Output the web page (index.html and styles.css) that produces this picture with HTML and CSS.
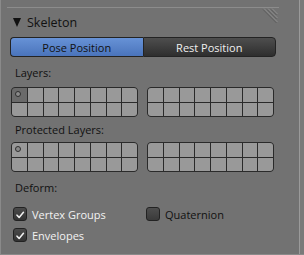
FILE: index.html
```html
<!DOCTYPE html>
<html>
<head>
<meta charset="utf-8">
<link rel="stylesheet" href="styles.css">
</head>
<body>
<div class="frame">
  <div class="region">
    <div class="panel">
      <div class="header">
        <span class="tri"></span>
        <span class="title">Skeleton</span>
        <svg class="grip" width="16" height="19" viewBox="0 0 16 19">
          <g stroke="#8e8e8e" stroke-width="1">
            <line x1="2" y1="0.5" x2="15.5" y2="14"/>
            <line x1="6" y1="0.5" x2="15.5" y2="10"/>
            <line x1="10" y1="0.5" x2="15.5" y2="6"/>
          </g>
          <g stroke="#5c5c5c" stroke-width="1">
            <line x1="1" y1="1.5" x2="14.5" y2="15"/>
            <line x1="5" y1="1.5" x2="14.5" y2="11"/>
            <line x1="9" y1="1.5" x2="14.5" y2="7"/>
          </g>
        </svg>
      </div>
      <div class="seg">
        <div class="segbtn on">Pose Position</div>
        <div class="segbtn off">Rest Position</div>
      </div>
      <div class="label l1">Layers:</div>
      <div class="grids">
        <div class="grid">
          <div class="cell act"><span class="dot"></span></div><div class="cell"></div><div class="cell"></div><div class="cell"></div><div class="cell"></div><div class="cell"></div><div class="cell"></div><div class="cell"></div>
          <div class="cell"></div><div class="cell"></div><div class="cell"></div><div class="cell"></div><div class="cell"></div><div class="cell"></div><div class="cell"></div><div class="cell"></div>
        </div>
        <div class="grid">
          <div class="cell"></div><div class="cell"></div><div class="cell"></div><div class="cell"></div><div class="cell"></div><div class="cell"></div><div class="cell"></div><div class="cell"></div>
          <div class="cell"></div><div class="cell"></div><div class="cell"></div><div class="cell"></div><div class="cell"></div><div class="cell"></div><div class="cell"></div><div class="cell"></div>
        </div>
      </div>
      <div class="label l2">Protected Layers:</div>
      <div class="grids g2">
        <div class="grid">
          <div class="cell"><span class="dot"></span></div><div class="cell"></div><div class="cell"></div><div class="cell"></div><div class="cell"></div><div class="cell"></div><div class="cell"></div><div class="cell"></div>
          <div class="cell"></div><div class="cell"></div><div class="cell"></div><div class="cell"></div><div class="cell"></div><div class="cell"></div><div class="cell"></div><div class="cell"></div>
        </div>
        <div class="grid">
          <div class="cell"></div><div class="cell"></div><div class="cell"></div><div class="cell"></div><div class="cell"></div><div class="cell"></div><div class="cell"></div><div class="cell"></div>
          <div class="cell"></div><div class="cell"></div><div class="cell"></div><div class="cell"></div><div class="cell"></div><div class="cell"></div><div class="cell"></div><div class="cell"></div>
        </div>
      </div>
      <div class="label deform">Deform:</div>
      <div class="checks">
        <div class="col">
          <div class="check"><span class="box on"><svg width="14" height="14" viewBox="0 0 14 14"><path d="M3.5 7.2 L6 9.8 L11 3.8" fill="none" stroke="#f2f2f2" stroke-width="1.8" stroke-linecap="round" stroke-linejoin="round"/></svg></span><span class="ctext light">Vertex Groups</span></div>
          <div class="check"><span class="box on"><svg width="14" height="14" viewBox="0 0 14 14"><path d="M3.5 7.2 L6 9.8 L11 3.8" fill="none" stroke="#f2f2f2" stroke-width="1.8" stroke-linecap="round" stroke-linejoin="round"/></svg></span><span class="ctext light">Envelopes</span></div>
        </div>
        <div class="col">
          <div class="check"><span class="box"></span><span class="ctext">Quaternion</span></div>
        </div>
      </div>
    </div>
  </div>
</div>
</body>
</html>
```

FILE: styles.css
```css
html, body {
  margin: 0;
  padding: 0;
  background: #727272;
}
.frame {
  width: 304px;
  height: 255px;
  box-sizing: border-box;
  border-left: 1px solid #8a8a8a;
  border-bottom: 1px solid #8a8a8a;
  background: #7a7a7a;
  display: flex;
  font-family: "Open Sans", "DejaVu Sans", sans-serif;
}
.region {
  width: 299px;
  height: 254px;
  background: #727272;
  border-right: 1px solid #9a9a9a;
  padding-top: 7px;
  padding-left: 6px;
  box-sizing: border-box;
}
.panel {
  width: 272px;
  border-top: 1px solid #8c8c8c;
}
.header {
  height: 28px;
  display: flex;
  align-items: center;
  position: relative;
}
.tri {
  width: 0;
  height: 0;
  border-left: 4.5px solid transparent;
  border-right: 4.5px solid transparent;
  border-top: 9px solid #111;
  margin-left: 6px;
  margin-right: 6px;
  margin-top: 1px;
}
.title {
  font-size: 12.5px;
  color: #111;
}
.grip {
  position: absolute;
  right: 1px;
  top: 0;
}
.seg {
  display: flex;
  margin-left: 3px;
  width: 266px;
  height: 20px;
  font-size: 11px;
  margin-top: 1px;
}
.segbtn {
  flex: 1;
  display: flex;
  align-items: center;
  justify-content: center;
  box-sizing: border-box;
  border: 1px solid #232323;
}
.segbtn.on {
  background: linear-gradient(#6792d6, #4a74bb);
  color: #111;
  border-radius: 4px 0 0 4px;
  border-right: none;
}
.segbtn.off {
  background: linear-gradient(#4e4e4e, #2e2e2e);
  color: #f0f0f0;
  border-radius: 0 4px 4px 0;
}
.label {
  font-size: 11px;
  color: #111;
  margin-left: 8px;
  height: 20px;
  line-height: 20px;
}
.l1 {
  margin-top: 6px;
}
.l2 {
  margin-top: 3px;
}
.grids {
  display: flex;
  gap: 9px;
  margin-left: 4px;
  margin-top: 4px;
}
.grids.g2 {
  margin-top: 2px;
}
.grid {
  display: grid;
  grid-template-columns: repeat(8, 1fr);
  grid-template-rows: 1fr 1fr;
  width: 127px;
  height: 30px;
  box-sizing: border-box;
  border: 1px solid #2a2a2a;
  border-radius: 4px;
  overflow: hidden;
  background: #2a2a2a;
  gap: 1px;
}
.cell {
  background: #999999;
  position: relative;
}
.cell.act {
  background: #6a6a6a;
}
.dot {
  position: absolute;
  left: 3px;
  top: 3px;
  width: 4px;
  height: 4px;
  border: 1px solid #2e2e2e;
  border-radius: 50%;
  background: #8a8a8a;
}
.deform {
  margin-top: 6px;
}
.checks {
  display: flex;
  margin-left: 6px;
  margin-top: 9px;
}
.col {
  width: 137px;
  display: flex;
  flex-direction: column;
  gap: 7px;
}
.check {
  display: flex;
  align-items: center;
  height: 14px;
}
.box {
  width: 14px;
  height: 14px;
  box-sizing: border-box;
  border: 1px solid #222;
  border-radius: 3px;
  background: linear-gradient(#4e4e4e, #3a3a3a);
  display: flex;
  margin-right: 5px;
}
.box.on {
  background: linear-gradient(#4a4a4a, #333);
}
.ctext {
  font-size: 11px;
  color: #111;
}
.ctext.light {
  color: #f2f2f2;
}
```
